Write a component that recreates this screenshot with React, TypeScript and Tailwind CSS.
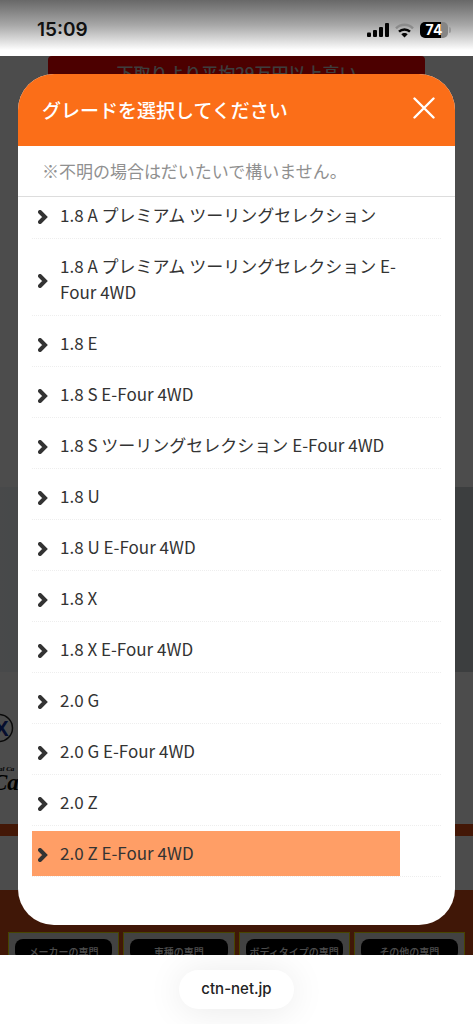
import React from "react";

const grades = [
  "1.8 A プレミアム ツーリングセレクション",
  "1.8 A プレミアム ツーリングセレクション E-Four 4WD",
  "1.8 E",
  "1.8 S E-Four 4WD",
  "1.8 S ツーリングセレクション E-Four 4WD",
  "1.8 U",
  "1.8 U E-Four 4WD",
  "1.8 X",
  "1.8 X E-Four 4WD",
  "2.0 G",
  "2.0 G E-Four 4WD",
  "2.0 Z",
  "2.0 Z E-Four 4WD",
];

const specialties = ["メーカーの専門", "車種の専門", "ボディタイプの専門", "その他の専門"];

function StatusBar() {
  return (
    <header className="flex h-14 items-center justify-between bg-linear-to-b from-[#686868] via-[#a8a8a8] via-45% to-white to-90% pt-1 pr-[22px] pl-[37px] font-['Inter',sans-serif]">
      <span className="text-[19px] font-semibold text-[#111]">15:09</span>
      <div className="flex items-center gap-1.5">
        <svg width="22" height="14" viewBox="0 0 22 14" fill="#050505" aria-hidden="true">
          <rect x="0" y="9.500" width="4" height="4.500" rx="1" />
          <rect x="6" y="7" width="4" height="7" rx="1" />
          <rect x="12" y="4" width="4" height="10" rx="1" />
          <rect x="18" y="0" width="4" height="14" rx="1" />
        </svg>
        <svg width="19" height="15" viewBox="0 0 19 15" fill="none" strokeWidth="2.4" aria-hidden="true">
          <path d="M1 5.3C5.700 .5 13.300 .5 18 5.300" stroke="#8b8b8b" />
          <path d="M4 8.700C7 5.700 12 5.700 15 8.700" stroke="#050505" />
          <path d="M6.300 11.300C8 9.600 11 9.600 12.700 11.300L9.500 14.500Z" fill="#050505" />
        </svg>
        <div className="flex items-center gap-px">
          <div className="flex h-4 w-7 items-center justify-center rounded-[5px] bg-linear-to-r from-black from-75% to-[#858585] to-75% text-sm font-bold text-white">
            74
          </div>
          <div className="h-1.5 w-0.5 rounded-r-full bg-[#999]" />
        </div>
      </div>
    </header>
  );
}

function BackgroundPage() {
  return (
    <div className="flex flex-col overflow-hidden bg-white [grid-area:1/1]" aria-hidden="true">
      <div className="mx-12 h-14 rounded-sm bg-[#ff0000] pt-1 text-center text-[17px] font-medium text-[#ccc]">
        下取りより平均29万円以上高い
      </div>
      <div className="h-[375px]" />
      <div className="h-[185px] bg-linear-to-r from-[#f0f5f8] to-[#c8cfd2]" />
      <div className="flex h-[152px] flex-col pt-10">
        <svg width="18" height="80" viewBox="0 0 18 80">
          <circle cx="-1" cy="16" r="13.500" fill="#fff" stroke="#222" strokeWidth="1.500" />
          <text x="-6" y="24" fontSize="22" fontWeight="bold" fill="#12309c" fontFamily="Liberation Sans, sans-serif">X</text>
          <text x="-3" y="59" fontSize="7" fontStyle="italic" fontWeight="bold" fontFamily="Liberation Serif, serif">tal Ca</text>
          <text x="-8" y="78" fontSize="23" fontStyle="italic" fontWeight="bold" fontFamily="Liberation Serif, serif">Ca</text>
        </svg>
      </div>
      <div className="h-3 bg-[#e14e16]" />
      <div className="h-[54px]" />
      <div className="grid h-[65px] grid-cols-4 gap-1 bg-[#d64e1a] px-2 pt-[42px]">
        {specialties.map((name) => (
          <div key={name} className="border border-[#f0e800] bg-[#ddd] px-1.5 pt-1.5">
            <div className="rounded-lg bg-black pt-[5px] text-center text-[10px] leading-4 font-medium whitespace-nowrap text-white">
              {name}
            </div>
          </div>
        ))}
      </div>
    </div>
  );
}

function GradeDialog() {
  return (
    <section
      role="dialog"
      aria-labelledby="grade-title"
      className="flex flex-col overflow-hidden rounded-[36px] bg-white pb-12"
    >
      <div className="flex h-18 items-center justify-between bg-[#fb6e18] pr-5 pl-6 text-white">
        <h1 id="grade-title" className="text-[19px] font-medium">
          グレードを選択してください
        </h1>
        <button type="button" aria-label="閉じる" className="pb-1">
          <svg width="22" height="22" viewBox="0 0 22 22" fill="none" stroke="#fff" strokeWidth="2.400" strokeLinecap="round">
            <path d="M1.500 1.500L20.500 20.500M20.500 1.500L1.500 20.500" />
          </svg>
        </button>
      </div>
      <p className="flex h-[51px] items-center border-b border-[#ddd] pl-6 text-[17px] text-[#909090]">
        ※不明の場合はだいたいで構いません。
      </p>
      <ul className="-mt-[9px] px-3.5">
        {grades.map((grade, index) => (
          <li key={grade} className="border-b border-dotted border-[#eee] pt-[5px]">
            <a
              href={`#grade-${index}`}
              className={`flex w-9/10 items-center gap-3 pt-[9px] pb-2.5 pl-1.5 text-[17px] leading-[26px] text-[#333] ${
                index === grades.length - 1 ? "bg-[#ff9e66]" : ""
              }`}
            >
              <svg className="mt-1 shrink-0" width="10" height="14" viewBox="0 0 10 14" fill="none" stroke="#333" strokeWidth="4" aria-hidden="true">
                <path d="M2 2L7 7L2 12" strokeLinecap="round" />
              </svg>
              <span>{grade}</span>
            </a>
          </li>
        ))}
      </ul>
    </section>
  );
}

export default function App() {
  return (
    <div className="flex min-h-screen flex-col bg-white font-['Noto_Sans_CJK_JP',sans-serif]">
      <StatusBar />
      <main className="grid grow">
        <BackgroundPage />
        <div className="z-10 bg-black/70 px-[18px] pt-[18px] pb-[30px] [grid-area:1/1]">
          <GradeDialog />
        </div>
      </main>
      <footer className="z-10 flex h-[69px] items-center justify-center overflow-hidden bg-white">
        <a
          href="#address"
          className="flex h-[39px] items-center rounded-full bg-white px-[22px] font-['Inter',sans-serif] text-[15px] font-medium text-[#222] shadow-[0_2px_36px_rgba(0,0,0,0.09)]"
        >
          ctn-net.jp
        </a>
      </footer>
    </div>
  );
}
